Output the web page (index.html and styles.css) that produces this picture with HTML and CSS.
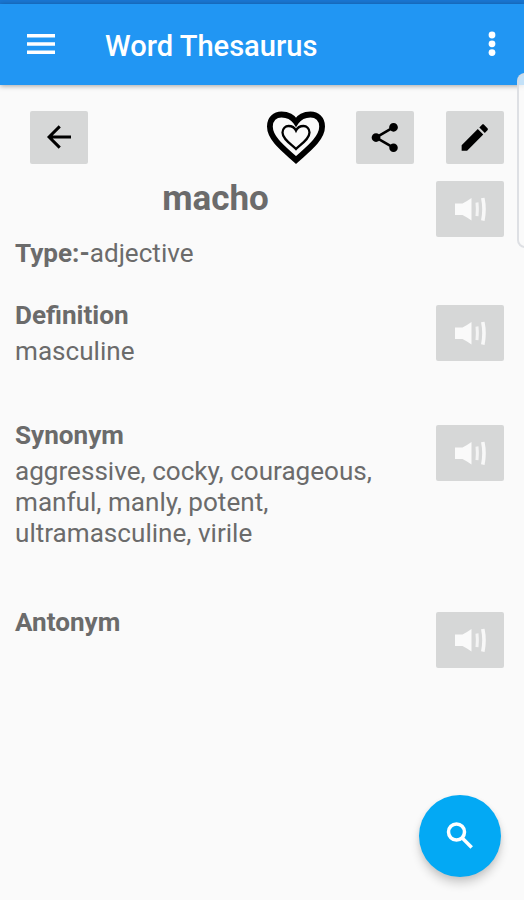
FILE: index.html
```
<!DOCTYPE html>
<html lang="en">
<head>
    <title>Word Thesaurus</title>
    <meta charset="UTF-8">
    <link rel="stylesheet" href="styles.css">
</head>
<body>
    <svg class="defs">
        <symbol id="speaker" viewBox="0 0 34 26">
            <path fill="#fafafa" d="M2 7.500h7.500c3-1.500 6-3.500 9-5.500v22.500c-3-2-6-4-9-5.500H2z"/>
            <path fill="none" stroke="#f4f4f4" stroke-width="3" d="M24 6.500q.8 6.800 0 13.600"/>
            <path fill="none" stroke="#f8f8f8" stroke-width="3.600" d="M29.800 2q2.400 11.300 0 22.600"/>
        </symbol>
    </svg>

    <div class="status-bar"></div>
    <header class="toolbar">
        <svg class="menu-icon" viewBox="0 0 28 20"><path d="M0 0h28v3.500H0zM0 8.200h28v3.500H0zM0 16.400h28v3.500H0z"/></svg>
        <h1>Word Thesaurus</h1>
        <svg class="more-icon" viewBox="0 0 8 26"><circle cx="4" cy="4" r="3.400"/><circle cx="4" cy="12.800" r="3.400"/><circle cx="4" cy="21.600" r="3.400"/></svg>
    </header>

    <main class="content">
        <div class="actions">
            <button class="btn btn-back" aria-label="Back">
                <svg width="36" height="36" viewBox="0 0 24 24"><path fill="none" stroke="#000" stroke-width="2" d="M20 12H6M12.500 4.900L5.400 12l7.100 7.100"/></svg>
            </button>
            <svg class="heart" viewBox="0 0 60 54">
                <path stroke-width="5.800" d="M30 49C19 39 3.900 28 3.900 15.500C3.900 8 9 3.500 15.500 3.500C22 3.500 27 6.500 30 11C33 6.500 38 3.500 44.500 3.500C51 3.500 56.100 8 56.100 15.500C56.100 28 41 39 30 49Z"/>
                <path stroke-width="2.300" d="M30 38C25 33 16.500 28 16.500 21.500C16.500 17.500 19.500 15 22.500 15C26 15 28.600 16.500 30 19.500C31.400 16.500 34 15 37.500 15C40.500 15 43.500 17.500 43.500 21.500C43.500 28 35 33 30 38Z"/>
            </svg>
            <button class="btn" aria-label="Share">
                <svg width="35" height="35" viewBox="0.500 0 24 24"><path d="M18 16.080c-.76 0-1.440.3-1.960.77L8.910 12.700c.05-.23.09-.46.09-.7s-.04-.47-.09-.7l7.050-4.110c.54.5 1.250.81 2.040.81 1.660 0 3-1.340 3-3s-1.340-3-3-3-3 1.340-3 3c0 .24.040.47.090.7L8.040 9.810C7.500 9.310 6.790 9 6 9c-1.660 0-3 1.340-3 3s1.340 3 3 3c.79 0 1.500-.31 2.040-.81l7.120 4.160c-.05.21-.08.43-.08.65 0 1.610 1.310 2.920 2.920 2.920s2.920-1.310 2.920-2.920-1.310-2.920-2.920-2.920z"/></svg>
            </button>
            <button class="btn" aria-label="Edit">
                <svg width="35" height="35" viewBox="0.500 0 24 24"><path d="M3 17.250V21h3.750L17.810 9.940l-3.750-3.750L3 17.250zM20.710 7.040c.39-.39.39-1.020 0-1.410l-2.340-2.340c-.39-.39-1.020-.39-1.410 0l-1.830 1.830 3.750 3.750 1.830-1.830z"/></svg>
            </button>
        </div>

        <div class="word-row">
            <h2>macho</h2>
            <button class="btn btn-speak" aria-label="Speak word"><svg><use href="#speaker"/></svg></button>
        </div>
        <p class="type"><b>Type:-</b>adjective</p>

        <section class="entry">
            <div class="text">
                <h3>Definition</h3>
                <p>masculine</p>
            </div>
            <button class="btn btn-speak" aria-label="Speak definition"><svg><use href="#speaker"/></svg></button>
        </section>
        <section class="entry entry-long">
            <div class="text">
                <h3>Synonym</h3>
                <p>aggressive, cocky, courageous, manful, manly, potent, ultramasculine, virile</p>
            </div>
            <button class="btn btn-speak" aria-label="Speak synonyms"><svg><use href="#speaker"/></svg></button>
        </section>
        <section class="entry">
            <div class="text">
                <h3>Antonym</h3>
            </div>
            <button class="btn btn-speak" aria-label="Speak antonyms"><svg><use href="#speaker"/></svg></button>
        </section>
    </main>

    <div class="edge-panel"></div>
    <button class="fab" aria-label="Search">
        <svg width="36" height="36" viewBox="0 0 36 36"><circle cx="14.500" cy="14" r="8"/><path d="M20 19.800l9.700 9.700"/></svg>
    </button>
</body>
</html>
```
FILE: styles.css
```
* { box-sizing: border-box; }
body {
    margin: 0;
    height: 900px;
    position: relative;
    overflow: hidden;
    background-color: #fafafa;
    color: #6b6b6b;
    font-family: Roboto, sans-serif;
    font-size: 26.1px;
    line-height: 31px;
}
h1, h2, h3, p { margin: 0; }
button { border: none; padding: 0; }
.defs { display: none; }

.status-bar { height: 4px; background-color: #1976d2; }
.toolbar {
    display: flex;
    align-items: center;
    height: 81px;
    padding: 0 28px 1px 27px;
    background-color: #2196f3;
    box-shadow: 0 1px 5px rgba(0,0,0,0.35);
}
.toolbar h1 {
    flex: 1;
    margin-left: 50px;
    padding-top: 4px;
    color: white;
    font-size: 29.1px;
    font-weight: 500;
}
.toolbar svg { fill: white; }
.menu-icon { width: 28px; height: 20px; }
.more-icon { width: 8px; height: 26px; }

.content { padding: 26px 20px 0 15px; }
.actions { display: flex; align-items: center; height: 52px; padding-left: 15px; }
.btn {
    display: flex;
    align-items: center;
    justify-content: center;
    width: 58px;
    height: 53px;
    border-radius: 2px;
    background-color: #d6d7d7;
}
.btn-back { margin-right: auto; }
.heart {
    width: 60px;
    height: 54px;
    margin-top: 2px;
    margin-right: 30px;
    fill: none;
    stroke: #000;
}
.actions .btn:last-child { margin-left: 32px; }

.word-row { display: flex; margin-top: 18px; }
.word-row h2 {
    flex: 1;
    padding-right: 20px;
    font-size: 35px;
    line-height: 35px;
    text-align: center;
}
.btn-speak { flex: none; width: 68px; height: 56px; }
.btn-speak svg { width: 34px; height: 26px; }
.type { margin-top: 1px; margin-bottom: 32px; }

.entry {
    display: flex;
    justify-content: space-between;
    padding-bottom: 54px;
}
.entry-long { padding-bottom: 59px; }
.entry .text { width: 375px; }
.entry h3 { margin-bottom: 6px; font-size: 26.1px; line-height: 29px; }
.entry .btn { margin-top: 4px; }

/* handle on the right side of the screen */
.edge-panel {
    position: absolute;
    top: 73px;
    right: -10px;
    width: 17px;
    height: 175px;
    border: 2px solid rgba(215,218,222,0.8);
    border-radius: 8px;
    background-color: rgba(250,250,250,0.75);
}
.fab {
    position: absolute;
    right: 23px;
    bottom: 23px;
    display: flex;
    align-items: center;
    justify-content: center;
    width: 82px;
    height: 82px;
    border-radius: 50%;
    background-color: #03a9f4;
    box-shadow: 0 7px 10px rgba(0,0,0,0.16), 0 2px 5px rgba(0,0,0,0.08);
}
.fab svg { fill: none; stroke: white; stroke-width: 3.5; }
```
